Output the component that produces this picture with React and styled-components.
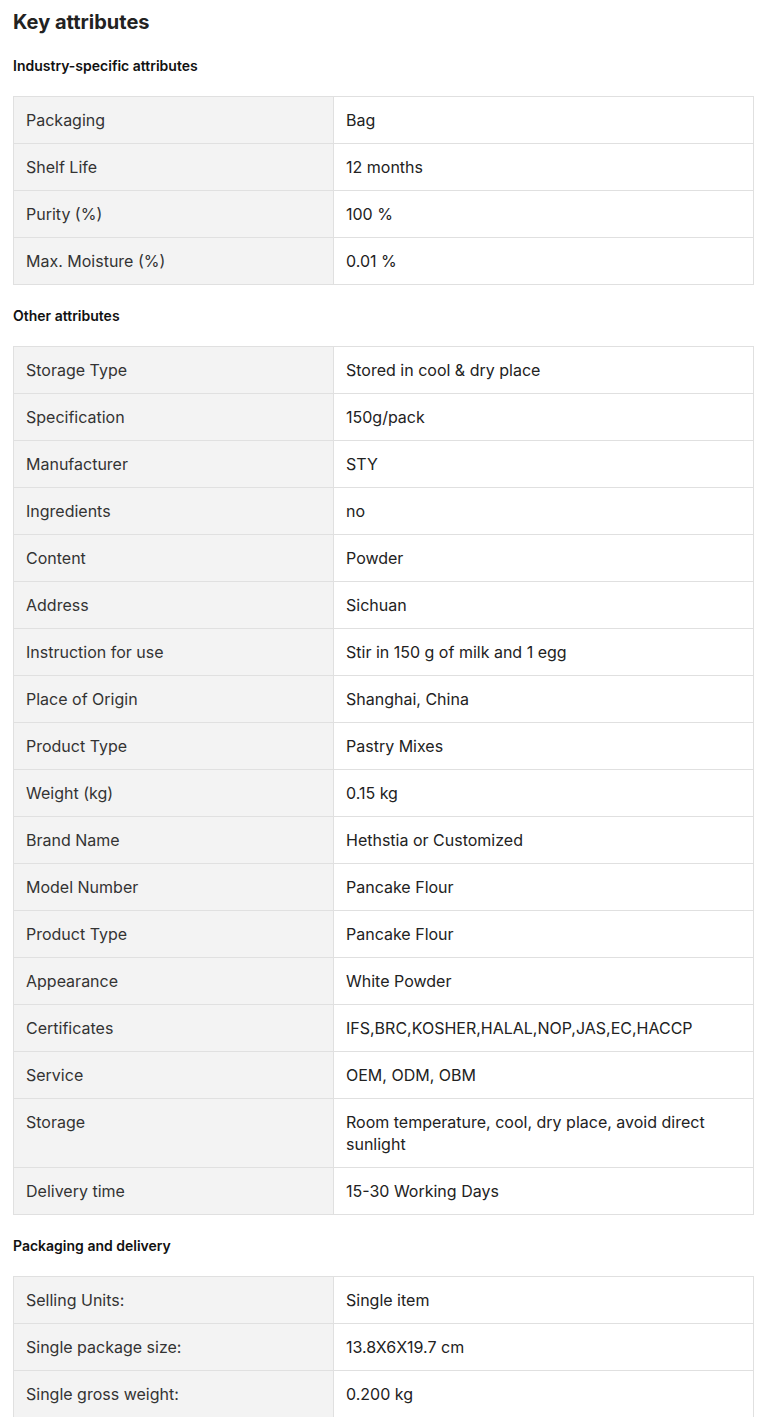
import React from 'react';
import styled, { createGlobalStyle } from 'styled-components';

const GlobalStyle = createGlobalStyle`
  body {
    margin: 0;
    background: #fff;
    font-family: Inter, "Liberation Sans", sans-serif;
    color: #222;
  }
`

const Page = styled.div`
  padding: 9px 14px 0 13px;
`
const Title = styled.h2`
  margin: 0;
  font-size: 20px;
  line-height: 26px;
  font-weight: 700;
  color: #222;
`
const GroupTitle = styled.h4`
  margin: 21px 0 20px;
  font-size: 14px;
  line-height: 20px;
  font-weight: 600;
  color: #111;
`
const Table = styled.table`
  width: 741px;
  border-collapse: collapse;
  table-layout: fixed;
  font-size: 16px;
  line-height: 22px;
`
const Label = styled.td`
  width: 295px;
  padding: 12px;
  background: #f3f3f3;
  border: 1px solid #e0e0e0;
  color: #333;
  vertical-align: top;
`
const Value = styled.td`
  padding: 12px;
  border: 1px solid #e0e0e0;
  color: #222;
  vertical-align: top;
`

const groups = [
  {
    title: 'Industry-specific attributes',
    rows: [
      ['Packaging', 'Bag'],
      ['Shelf Life', '12 months'],
      ['Purity (%)', '100 %'],
      ['Max. Moisture (%)', '0.01 %'],
    ],
  },
  {
    title: 'Other attributes',
    rows: [
      ['Storage Type', 'Stored in cool & dry place'],
      ['Specification', '150g/pack'],
      ['Manufacturer', 'STY'],
      ['Ingredients', 'no'],
      ['Content', 'Powder'],
      ['Address', 'Sichuan'],
      ['Instruction for use', 'Stir in 150 g of milk and 1 egg'],
      ['Place of Origin', 'Shanghai, China'],
      ['Product Type', 'Pastry Mixes'],
      ['Weight (kg)', '0.15 kg'],
      ['Brand Name', 'Hethstia or Customized'],
      ['Model Number', 'Pancake Flour'],
      ['Product Type', 'Pancake Flour'],
      ['Appearance', 'White Powder'],
      ['Certificates', 'IFS,BRC,KOSHER,HALAL,NOP,JAS,EC,HACCP'],
      ['Service', 'OEM, ODM, OBM'],
      ['Storage', 'Room temperature, cool, dry place, avoid direct sunlight'],
      ['Delivery time', '15-30 Working Days'],
    ],
  },
  {
    title: 'Packaging and delivery',
    rows: [
      ['Selling Units:', 'Single item'],
      ['Single package size:', '13.8X6X19.7 cm'],
      ['Single gross weight:', '0.200 kg'],
    ],
  },
]

export default function App() {
  return (
    <>
      <GlobalStyle />
      <Page>
        <Title>Key attributes</Title>
        { groups.map((group) => (
          <section key={ group.title }>
            <GroupTitle>{ group.title }</GroupTitle>
            <Table>
              <tbody>
                { group.rows.map(([label, value], i) => (
                  <tr key={ i }>
                    <Label>{ label }</Label>
                    <Value>{ value }</Value>
                  </tr>
                )) }
              </tbody>
            </Table>
          </section>
        )) }
      </Page>
    </>
  )
}
